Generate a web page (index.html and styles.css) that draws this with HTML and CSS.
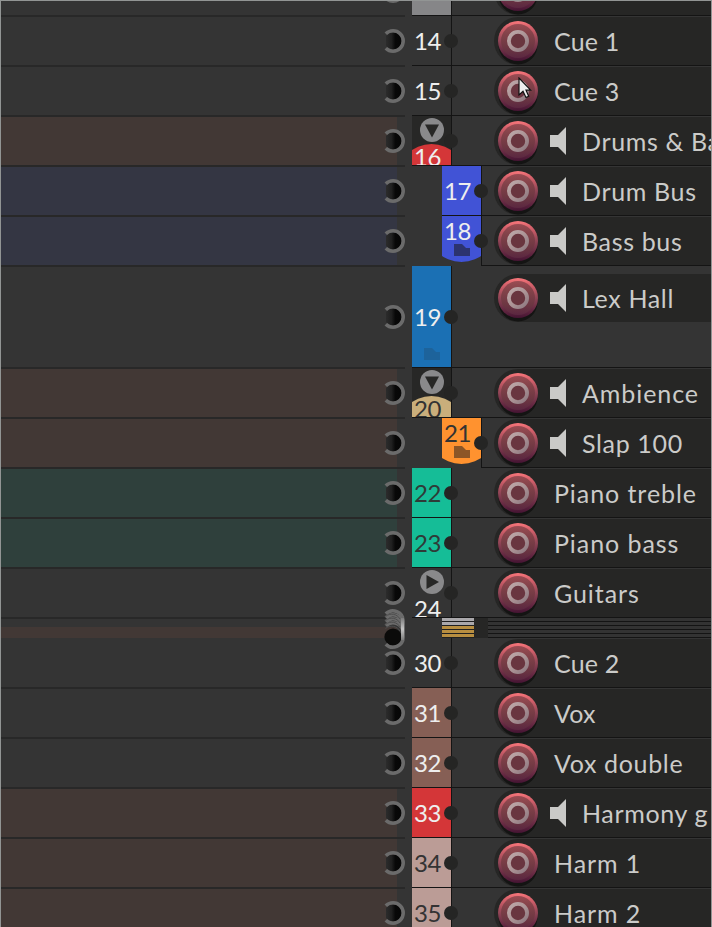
FILE: index.html
```
<!DOCTYPE html>
<html lang="en">
<head>
<meta charset="utf-8">
<title>Tracks</title>
<link rel="stylesheet" href="styles.css">
</head>
<body>
<svg class="defs" width="0" height="0" aria-hidden="true">
  <defs>
    <linearGradient id="rim" x1="0" y1="0" x2="0" y2="1"><stop offset="0" stop-color="#f9777b"/><stop offset=".15" stop-color="#d9636c"/><stop offset=".5" stop-color="#8f4455"/><stop offset="1" stop-color="#451433"/></linearGradient>
    <linearGradient id="face" x1="0" y1="0" x2="0" y2="1"><stop offset="0" stop-color="#9a4c53"/><stop offset=".3" stop-color="#824249"/><stop offset=".7" stop-color="#6c3642"/><stop offset="1" stop-color="#5b2741"/></linearGradient>
    <linearGradient id="ring" x1="0" y1="0" x2="1" y2="1"><stop offset="0" stop-color="#bda8a9"/><stop offset=".5" stop-color="#ad9597"/><stop offset="1" stop-color="#8d7880"/></linearGradient>
    <linearGradient id="well" x1="0" y1="0" x2="1" y2="0"><stop offset="0" stop-color="#2c2c2c"/><stop offset=".35" stop-color="#202020"/><stop offset=".6" stop-color="#080808"/><stop offset="1" stop-color="#060606"/></linearGradient>
    <linearGradient id="stack" gradientUnits="userSpaceOnUse" x1="0" y1="8" x2="0" y2="34"><stop offset="0" stop-color="#6f6f6f"/><stop offset=".5" stop-color="#c4c4c4"/><stop offset="1" stop-color="#6f6f6f"/></linearGradient>
  </defs>
  <symbol id="knob" viewBox="0 0 26 26"><path d="M6 8 A8.6 8.6 0 1 1 6 18Z" fill="url(#well)"/><path d="M5.8 5.8 A10.2 10.2 0 1 1 5.8 20.2" fill="none" stroke="#6b6b6b" stroke-width="3.5"/></symbol>
  <symbol id="rec" viewBox="0 0 48 48"><circle cx="24" cy="28" r="19.5" fill="#141413"/><circle cx="24" cy="24" r="20" fill="url(#rim)"/><circle cx="24" cy="24" r="17" fill="url(#face)"/><circle cx="24" cy="24" r="8" fill="#69353f"/><circle cx="24" cy="24" r="9.1" fill="none" stroke="url(#ring)" stroke-width="3.8"/></symbol>
  <symbol id="speaker" viewBox="0 0 16 28"><path d="M0 8H8L16 0V28L8 20H0Z" fill="#c9c9c7"/></symbol>
  <symbol id="folder" viewBox="0 0 16 12"><path d="M0 0H8L12 4H16V12H0Z" fill="currentColor"/></symbol>
  <symbol id="open" viewBox="0 0 24 24"><circle cx="12" cy="12" r="12" fill="#89898b"/><path d="M5 6.5H19L12 19.5Z" fill="#272726"/></symbol>
  <symbol id="closed" viewBox="0 0 24 24"><circle cx="12" cy="12" r="12" fill="#89898b"/><path d="M6.5 5V19L19 12Z" fill="#272726"/></symbol>
</svg>
<main class="tracks">
  <div class="row row-cut"><div class="lane"><svg class="knob"><use href="#knob"/></svg></div><div class="index grey"></div><div class="strip"><div class="panel"><svg class="rec"><use href="#rec"/></svg></div></div></div>
  <div class="row"><div class="lane"><svg class="knob"><use href="#knob"/></svg></div><div class="index">14<i class="dot"></i></div><div class="strip"><div class="panel"><svg class="rec"><use href="#rec"/></svg><span class="tight">Cue 1</span></div></div></div>
  <div class="row"><div class="lane"><svg class="knob"><use href="#knob"/></svg></div><div class="index">15<i class="dot"></i></div><div class="strip"><div class="panel"><svg class="rec"><use href="#rec"/></svg><span class="tight">Cue 3</span><svg class="cursor" viewBox="0 0 14 22"><path d="M1 1V18L5 14.3L8 20.5L10.7 19.3L8 13.2H12.7Z" fill="#eee" stroke="#111" stroke-width="1.2"/></svg></div></div></div>
  <div class="row"><div class="lane brown"><svg class="knob"><use href="#knob"/></svg></div><div class="index parent"><svg class="fold"><use href="#open"/></svg><div class="tab red">16</div><i class="dot"></i></div><div class="strip"><div class="panel"><svg class="rec"><use href="#rec"/></svg><svg class="speaker"><use href="#speaker"/></svg><span>Drums &amp; Ba</span></div></div></div>
  <div class="row"><div class="lane navy"><svg class="knob"><use href="#knob"/></svg></div><div class="index child blue">17<i class="dot"></i></div><div class="strip"><div class="panel"><svg class="rec"><use href="#rec"/></svg><svg class="speaker"><use href="#speaker"/></svg><span>Drum Bus</span></div></div></div>
  <div class="row"><div class="lane navy"><svg class="knob"><use href="#knob"/></svg></div><div class="index child last"><div class="tail blue">18<svg class="folder"><use href="#folder"/></svg></div><i class="dot"></i></div><div class="strip"><div class="panel"><svg class="rec"><use href="#rec"/></svg><svg class="speaker"><use href="#speaker"/></svg><span>Bass bus</span></div></div></div>
  <div class="row row-tall"><div class="lane"><svg class="knob"><use href="#knob"/></svg></div><div class="index azure">19<svg class="folder"><use href="#folder"/></svg><i class="dot"></i></div><div class="strip"><div class="panel"><svg class="rec"><use href="#rec"/></svg><svg class="speaker"><use href="#speaker"/></svg><span>Lex Hall</span></div></div></div>
  <div class="row"><div class="lane brown"><svg class="knob"><use href="#knob"/></svg></div><div class="index parent"><svg class="fold"><use href="#open"/></svg><div class="tab tan">20</div><i class="dot"></i></div><div class="strip"><div class="panel"><svg class="rec"><use href="#rec"/></svg><svg class="speaker"><use href="#speaker"/></svg><span class="wide">Ambience</span></div></div></div>
  <div class="row"><div class="lane brown"><svg class="knob"><use href="#knob"/></svg></div><div class="index child last"><div class="tail orange">21<svg class="folder"><use href="#folder"/></svg></div><i class="dot"></i></div><div class="strip"><div class="panel"><svg class="rec"><use href="#rec"/></svg><svg class="speaker"><use href="#speaker"/></svg><span>Slap 100</span></div></div></div>
  <div class="row"><div class="lane green"><svg class="knob"><use href="#knob"/></svg></div><div class="index teal">22<i class="dot"></i></div><div class="strip"><div class="panel"><svg class="rec"><use href="#rec"/></svg><span class="wide">Piano treble</span></div></div></div>
  <div class="row"><div class="lane green"><svg class="knob"><use href="#knob"/></svg></div><div class="index teal">23<i class="dot"></i></div><div class="strip"><div class="panel"><svg class="rec"><use href="#rec"/></svg><span class="wide">Piano bass</span></div></div></div>
  <div class="row"><div class="lane"><svg class="knob"><use href="#knob"/></svg></div><div class="index closed"><svg class="fold"><use href="#closed"/></svg><div class="tab">24</div><i class="dot"></i></div><div class="strip"><div class="panel"><svg class="rec"><use href="#rec"/></svg><span class="wide">Guitars</span></div></div></div>
  <div class="row row-group"><div class="lane"><svg class="knob-stack" viewBox="0 0 26 42"><circle cx="13" cy="29" r="8.6" fill="#0b0b0a"/><g fill="none" stroke="#6b6b6b" stroke-width="3.5"><path d="M5.8 5.8A10.2 10.2 0 0 1 23.2 13V29A10.2 10.2 0 0 1 5.8 36.2"/><path d="M5.8 9.8A10.2 10.2 0 0 1 23.2 17M5.8 13.8A10.2 10.2 0 0 1 23.2 21M5.8 17.8A10.2 10.2 0 0 1 23.2 25"/></g><g fill="none" stroke="#4d4d4d" stroke-width="1"><path d="M5.5 8.5A9.5 9.5 0 0 1 20 11M5.5 12.5A9.5 9.5 0 0 1 20 15M5.5 16.5A9.5 9.5 0 0 1 20 19M5.5 20.5A9.5 9.5 0 0 1 20 23"/></g><path d="M22.5 10V32" stroke="url(#stack)" stroke-width="3"/></svg></div><div class="bars"><i></i><i></i><i class="gold"></i><i class="gold"></i><i class="gold"></i></div><div class="gap"></div><div class="lines"></div></div>
  <div class="row"><div class="lane first"><svg class="knob"><use href="#knob"/></svg></div><div class="index">30<i class="dot"></i></div><div class="strip"><div class="panel"><svg class="rec"><use href="#rec"/></svg><span class="tight">Cue 2</span></div></div></div>
  <div class="row"><div class="lane"><svg class="knob"><use href="#knob"/></svg></div><div class="index umber">31<i class="dot"></i></div><div class="strip"><div class="panel"><svg class="rec"><use href="#rec"/></svg><span class="tight">Vox</span></div></div></div>
  <div class="row"><div class="lane"><svg class="knob"><use href="#knob"/></svg></div><div class="index umber">32<i class="dot"></i></div><div class="strip"><div class="panel"><svg class="rec"><use href="#rec"/></svg><span>Vox double</span></div></div></div>
  <div class="row"><div class="lane brown"><svg class="knob"><use href="#knob"/></svg></div><div class="index red">33<i class="dot"></i></div><div class="strip"><div class="panel"><svg class="rec"><use href="#rec"/></svg><svg class="speaker"><use href="#speaker"/></svg><span>Harmony g</span></div></div></div>
  <div class="row"><div class="lane brown"><svg class="knob"><use href="#knob"/></svg></div><div class="index pink">34<i class="dot"></i></div><div class="strip"><div class="panel"><svg class="rec"><use href="#rec"/></svg><span class="wide">Harm 1</span></div></div></div>
  <div class="row"><div class="lane brown"><svg class="knob"><use href="#knob"/></svg></div><div class="index pink">35<i class="dot"></i></div><div class="strip"><div class="panel"><svg class="rec"><use href="#rec"/></svg><span class="wide">Harm 2</span></div></div></div>
</main>
</body>
</html>
```
FILE: styles.css
```
* { box-sizing: border-box; }
body { margin: 0; background: #343434; font-family: Lato, "Open Sans", sans-serif; }
.defs { display: block; }
.tracks { width: 712px; height: 927px; overflow: hidden; border: 1px solid #929594; border-bottom: 0; color: #cbcbc9; }
.row { display: flex; height: 50px; }
.row-cut { height: 15px; }
.row-tall { height: 102px; }
.row-group { height: 20px; }

.lane { flex: none; width: 404px; margin-right: 7px; display: flex; align-items: center; justify-content: flex-end; border: solid #282828; border-width: 1px 0; background: no-repeat linear-gradient(var(--fill, #343434), var(--fill, #343434)) 0 0 / 396px 100%; }
.lane.first { border-top-color: transparent; }
.brown { --fill: #423835; }
.navy { --fill: #343643; }
.green { --fill: #2f403c; }
.knob { flex: none; width: 26px; height: 26px; margin-right: -1px; }
.row-cut .lane { border-top: 0; align-items: flex-end; }
.row-cut .knob { margin-bottom: 11px; }

.index { position: relative; flex: none; width: 40px; border: solid #141414; border-width: 0 1px 1px 0; padding-left: 2px; font-size: 24px; letter-spacing: -.4px; line-height: 50px; color: #eee; }
.index.child { margin-left: 30px; }
.index.last { border-bottom: 0; padding: 0; }
.index.parent, .index.closed { padding: 0; display: flex; flex-direction: column; align-items: center; }
.parent { background: #272726; }
.row-tall .index { line-height: 101px; }
.dot { position: absolute; z-index: 1; right: -7px; top: 18px; width: 14px; height: 14px; border-radius: 50%; background: #252524; }
.row-tall .dot { top: 44px; }
.fold { flex: none; width: 24px; height: 24px; margin: 2px 0 0; }
.tab { width: 39px; height: 23px; overflow: hidden; padding-left: 2px; line-height: 29px; clip-path: circle(35px at 50% 37px); }
.closed .tab { clip-path: none; }
.tail { width: 39px; height: 46px; padding-left: 2px; line-height: 30px; clip-path: circle(35px at 50% 11px); display: flex; flex-direction: column; }
.folder { width: 16px; height: 12px; margin-left: 10px; margin-top: -2px; }
.azure .folder { position: absolute; left: 12px; bottom: 7px; margin: 0; color: #1d639b; }
.grey { background: #868688; }
.red { background: #d43638; }
.blue { background: #4153d6; }
.blue .folder { color: #2c336f; }
.azure { background: #1b70b4; }
.tan { background: #c9ae7b; color: #333; }
.orange { background: #ff922f; color: #333; }
.orange .folder { color: #8c5627; }
.teal { background: #15bd97; color: #2e3b38; }
.umber { background: #865f55; }
.pink { background: #bb9c96; color: #333; }

.strip { flex: 1; min-width: 0; display: flex; align-items: flex-start; justify-content: flex-end; border-bottom: 1px solid #141414; }
.panel { position: relative; flex: none; width: 217px; height: 48px; margin-top: 1px; display: flex; align-items: center; border-radius: 24px 0 0 24px; background: #262625; font-size: 25px; letter-spacing: .65px; white-space: nowrap; overflow: hidden; line-height: 48px; }
.tight { letter-spacing: .2px; }
.wide { letter-spacing: .93px; }
.row-tall .panel { margin-top: 8px; }
.row-cut .strip { align-items: flex-end; overflow: hidden; }
.rec { flex: none; width: 48px; height: 48px; margin-right: 12px; }
.speaker { flex: none; width: 16px; height: 28px; margin: 0 16px 0 -4px; }
.cursor { position: absolute; left: 24px; top: 10px; width: 14px; height: 22px; }

.row-group .lane { border-width: 1px 0 0; background: linear-gradient(#423835, #423835) 0 8px / 396px 12px no-repeat; }
.knob-stack { position: relative; z-index: 1; flex: none; width: 26px; height: 42px; margin-right: -1px; }
.bars { width: 32px; margin-left: 30px; }
.bars i { display: block; height: 4px; border-bottom: 1px solid #202020; background: #aaa8ab; }
.bars .gold { background: #b88e40; }
.gap { width: 14px; background: #262625; }
.lines { flex: 1; background: repeating-linear-gradient(#333 0 3px, #141414 3px 4px); }
```
